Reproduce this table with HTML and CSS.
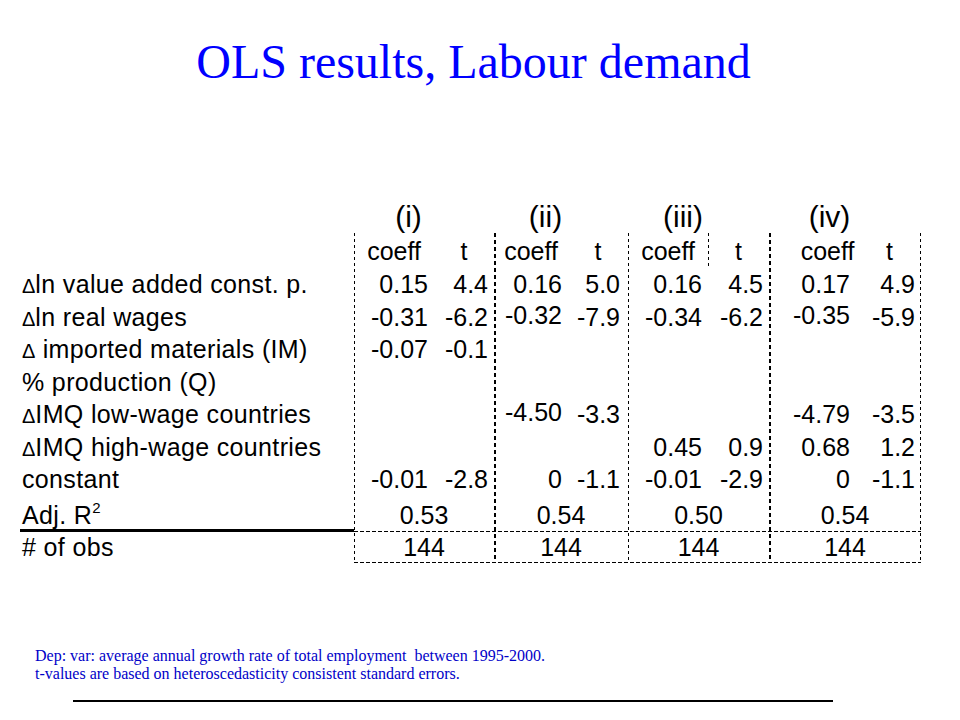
FILE: index.html
```html
<!DOCTYPE html>
<html lang="en">
<head>
<meta charset="utf-8">
<title>OLS results, Labour demand</title>
<link rel="stylesheet" href="styles.css">
</head>
<body>
<h1 class="title">OLS results, Labour demand</h1>

<div class="table-wrap">
  <div class="grid data">
    <div></div>
    <div class="grp">(i)</div>
    <div class="grp">(ii)</div>
    <div class="grp">(iii)</div>
    <div class="grp">(iv)</div>

    <div></div>
    <div class="hd">coeff</div><div class="hd">t</div>
    <div class="hd">coeff</div><div class="hd">t</div>
    <div class="hd">coeff</div><div class="hd">t</div>
    <div class="hd hd-shift">coeff</div><div class="hd">t</div>

    <div class="lab"><span class="d">&Delta;</span>ln value added const. p.</div>
    <div class="c">0.15</div><div class="t">4.4</div>
    <div class="c">0.16</div><div class="t t2">5.0</div>
    <div class="c">0.16</div><div class="t">4.5</div>
    <div class="c c4">0.17</div><div class="t">4.9</div>

    <div class="lab"><span class="d">&Delta;</span>ln real wages</div>
    <div class="c">-0.31</div><div class="t">-6.2</div>
    <div class="c up">-0.32</div><div class="t t2">-7.9</div>
    <div class="c">-0.34</div><div class="t">-6.2</div>
    <div class="c c4 up">-0.35</div><div class="t">-5.9</div>

    <div class="lab"><span class="d">&Delta;</span> imported materials (IM)</div>
    <div class="c">-0.07</div><div class="t">-0.1</div>
    <div></div><div></div><div></div><div></div><div></div><div></div>

    <div class="lab">% production (Q)</div>
    <div></div><div></div><div></div><div></div><div></div><div></div><div></div><div></div>

    <div class="lab"><span class="d">&Delta;</span>IMQ low-wage countries</div>
    <div></div><div></div>
    <div class="c up">-4.50</div><div class="t t2">-3.3</div>
    <div></div><div></div>
    <div class="c c4">-4.79</div><div class="t">-3.5</div>

    <div class="lab"><span class="d">&Delta;</span>IMQ high-wage countries</div>
    <div></div><div></div><div></div><div></div>
    <div class="c">0.45</div><div class="t">0.9</div>
    <div class="c c4">0.68</div><div class="t">1.2</div>

    <div class="lab">constant</div>
    <div class="c">-0.01</div><div class="t">-2.8</div>
    <div class="c">0</div><div class="t t2">-1.1</div>
    <div class="c">-0.01</div><div class="t">-2.9</div>
    <div class="c c4">0</div><div class="t">-1.1</div>

    <div class="lab adj">Adj. R<sup class="sq">2</sup></div>
    <div class="span adj">0.53</div>
    <div class="span adj">0.54</div>
    <div class="span adj">0.50</div>
    <div class="span adj">0.54</div>

    <div class="lab obs"># of obs</div>
    <div class="span obs">144</div>
    <div class="span obs">144</div>
    <div class="span obs">144</div>
    <div class="span obs">144</div>
  </div>

  <div class="grid lines" aria-hidden="true">
    <div class="v thin col2"></div>
    <div class="v bold col4"></div>
    <div class="v thin col6"></div>
    <div class="v thin col7"></div>
    <div class="v bold col8"></div>
    <div class="v thin col9"></div>
    <div class="h thick"></div>
    <div class="h dash r10"></div>
    <div class="h dash r11"></div>
  </div>
</div>

<div class="notes">
  <p>Dep: var: average annual growth rate of total employment&nbsp; between 1995-2000.</p>
  <p>t-values are based on heteroscedasticity consistent standard errors.</p>
</div>

<div class="rule"></div>
</body>
</html>
```

FILE: styles.css
```css
* {
  box-sizing: border-box;
}

html, body {
  margin: 0;
  padding: 0;
  background: #ffffff;
}

body {
  width: 960px;
  height: 720px;
  overflow: hidden;
}

.title {
  margin: 0;
  padding: 34px 13px 0 0;
  font-family: "Liberation Serif", "Times New Roman", serif;
  font-weight: normal;
  font-size: 48px;
  line-height: 56px;
  color: #0000ff;
  text-align: center;
}

.table-wrap {
  display: grid;
  margin: 110px 0 0 20px;
  width: 901px;
}

.grid {
  grid-area: 1 / 1;
  display: grid;
  grid-template-columns: 334px 80px 60px 74px 60px 80px 61px 89px 63px;
  grid-template-rows: 33px 33px repeat(7, 32.5px) 38.5px 31px;
}

.data {
  font-family: "Liberation Sans", Arial, sans-serif;
  font-size: 25px;
  color: #000;
  line-height: 32.5px;
}

.data > div {
  padding-top: 2px;
  white-space: nowrap;
}

.data > .grp {
  grid-column: span 2;
  padding: 0 31px 0 0;
  font-size: 30px;
  line-height: 33px;
  text-align: center;
}

.data > .hd {
  text-align: center;
  line-height: 33px;
}

.data > .hd-shift {
  padding-left: 28px;
}

.lab {
  padding-left: 2px;
  letter-spacing: 0.35px;
}

.d {
  font-size: 20px;
  letter-spacing: 0;
}

.c, .t {
  text-align: right;
  padding-right: 6px;
}

.t2 {
  padding-right: 8px;
}

.c4 {
  padding-right: 8px;
}

.data > .up {
  padding-top: 0;
}

.span {
  grid-column: span 2;
  text-align: center;
}

.data > .adj {
  padding-top: 5px;
}

.data > .obs {
  padding-top: 0;
  line-height: 31px;
}

.sq {
  font-size: 15px;
  line-height: 0;
  vertical-align: 11px;
}

/* overlay lines layer */
.lines {
  pointer-events: none;
}

.v {
  grid-row: 2 / -1;
  justify-self: start;
}

.v.thin {
  width: 1px;
  background: repeating-linear-gradient(to bottom, #000 0 3px, transparent 3px 6px);
}

.v.bold {
  width: 2px;
  background: repeating-linear-gradient(to bottom, #000 0 4px, transparent 4px 7px);
}

.col2 { grid-column: 2; }
.col4 { grid-column: 4; }
.col6 { grid-column: 6; }
.col7 { grid-column: 7; grid-row: 2 / 3; }
.col8 { grid-column: 8; }
.col9 { grid-column: 9; justify-self: end; }

.h {
  align-self: end;
}

.h.thick {
  grid-row: 10;
  grid-column: 1;
  height: 3px;
  background: #000;
}

.h.dash {
  grid-column: 2 / -1;
  height: 1px;
  background: repeating-linear-gradient(to right, #000 0 4px, transparent 4px 6px);
}

.r10 { grid-row: 10; }
.r11 { grid-row: 11; }

.notes {
  margin: 84px 0 0 35px;
  font-family: "Liberation Serif", "Times New Roman", serif;
  font-size: 16px;
  line-height: 18px;
  color: #0000c8;
}

.notes p {
  margin: 0;
}

.rule {
  margin: 17px 0 0 73px;
  width: 760px;
  height: 2px;
  background: #000;
}
```
